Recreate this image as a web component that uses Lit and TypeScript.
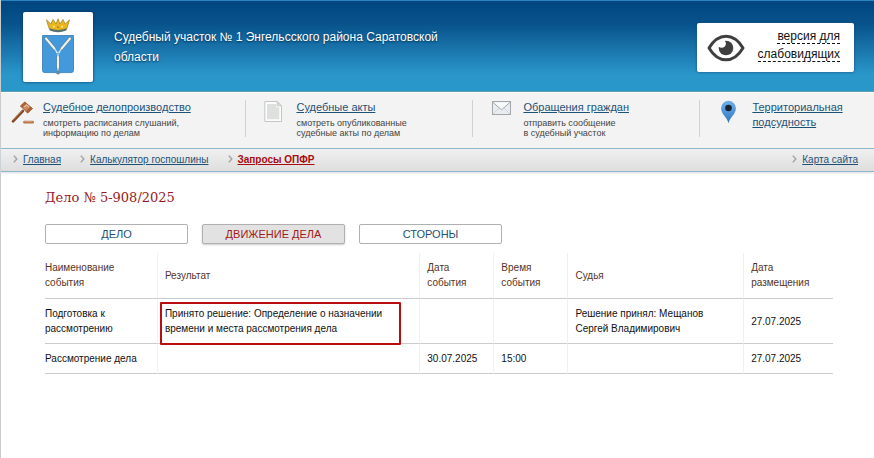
import { LitElement, html, svg, css, nothing } from "lit";
import { customElement, state } from "lit/decorators.js";
import { classMap } from "lit/directives/class-map.js";

const emblem = svg`
  <svg viewBox="0 0 34 58" width="34" height="58" aria-hidden="true">
    <path d="M5.4 1.8 9.8 6 12 1.4 15 6 17 .8 19 6 22 1.4 24.2 6 28.6 1.8 25.8 10.8Q17 14.4 8.2 10.8Z" fill="#e9b71d" stroke="#a07c1c" stroke-width=".7"/>
    <path d="M8.2 10.2Q17 13.6 25.8 10.2L25.3 12.6Q17 15.8 8.7 12.6Z" fill="#58716b"/>
    <circle cx="13" cy="8.6" r=".9" fill="#fff3a0"/><circle cx="17" cy="9.2" r=".9" fill="#b8701c"/><circle cx="21" cy="8.6" r=".9" fill="#fff3a0"/>
    <path d="M1.5 17.5H32.5V52.5Q32.5 54.6 30 54.6H20Q18 54.8 17 56.4Q16 54.8 14 54.6H4Q1.5 54.6 1.5 52.5Z" fill="#4499da" stroke="#3478b4" stroke-width=".8"/>
    <g stroke="#53768c" stroke-width="3.2" stroke-linecap="round"><path d="M5 20.5 13.4 30.5"/><path d="M29 20.5 20.6 30.5"/><path d="M17 39V49.5"/></g>
    <g stroke="#f3f1e6" stroke-width="2.2" stroke-linecap="round"><path d="M5 20.5 13.4 30.5"/><path d="M29 20.5 20.6 30.5"/><path d="M17 39V49.5"/></g>
    <path d="M13.4 30.5 16 34.4M20.6 30.5 18 34.4M17 36V39M17 50V54" fill="none" stroke="#dfe9ee" stroke-width="1.2"/>
    <circle cx="16" cy="34.6" r=".9" fill="#dfe8ea"/><circle cx="18.2" cy="34.6" r=".9" fill="#dfe8ea"/>
    <circle cx="17" cy="54" r="1.8" fill="#6a8798"/>
  </svg>`;

const eye = svg`
  <svg viewBox="0 0 38 28" width="38" height="28" aria-hidden="true">
    <path d="M2 14Q9 2.2 19 2.2T36 14Q29 25.8 19 25.8T2 14Z" fill="#fff" stroke="#3f3f3f" stroke-width="3" stroke-linejoin="round"/>
    <circle cx="19" cy="14" r="7.3" fill="#3f3f3f"/>
    <path d="M17.6 6.4A4.2 4.2 0 1 1 11.6 12.6L10.6 8.5Z" fill="#fff"/>
  </svg>`;

const gavel = svg`
  <svg viewBox="0 0 24 24" width="24" height="24" aria-hidden="true">
    <path d="M2 21.4 11.8 11" stroke="#7c4223" stroke-width="2.6" stroke-linecap="round"/>
    <path d="M2.4 20.2 11.2 10.8" stroke="#bd7a4b" stroke-width="1" stroke-linecap="round"/>
    <path d="M9.6 6 14 2.2 21.4 8.6 16.6 13Z" fill="#c98a5c" stroke="#8b4f2c" stroke-width=".9" stroke-linejoin="round"/>
    <path d="M9 6.2 13.6 1.6 15.8 3.4 11.2 7.8ZM14.8 11.2 19.6 6.6 21.8 8.6 16.9 13.2Z" fill="#a9633b"/>
    <path d="M13 7.2 15.4 5 18 7.2" fill="none" stroke="#ecc09c" stroke-width="1.1"/>
    <rect x="12.2" y="20.8" width="10.8" height="2.8" rx="1.4" fill="#b7744a"/>
    <path d="M13.6 21.6H21.6" stroke="#dfa47d" stroke-width=".8"/>
  </svg>`;

const page = svg`
  <svg viewBox="0 0 24 24" width="24" height="24" aria-hidden="true">
    <path d="M.8 1.5H13.2L17.5 5.8V21.5H.8Z" fill="#fcfcfc" stroke="#c4c6c6" stroke-width="1"/>
    <path d="M3 4H12.3V7.2H15.3V19.2H3Z" fill="#dde0dd"/>
    <path d="M13.2 1.5V5.8H17.5Z" fill="#d9dbdb" stroke="#c4c6c6" stroke-width=".8"/>
  </svg>`;

const mail = svg`
  <svg viewBox="0 0 24 24" width="24" height="24" aria-hidden="true">
    <rect x="1.5" y="1.5" width="18" height="13" fill="#e9edef" stroke="#a0a8ad"/>
    <path d="M2 14 8 8M19 14 13 8" stroke="#cfd6d9" stroke-width="1"/>
    <path d="M2 2.4 10.5 9.8 19 2.4" fill="#fafbfb" stroke="#a0a8ad" stroke-width="1"/>
  </svg>`;

const pin = svg`
  <svg viewBox="0 0 24 24" width="24" height="24" aria-hidden="true">
    <defs><linearGradient id="g" x1="0" y1="0" x2="0" y2="1"><stop offset="0" stop-color="#71afe6"/><stop offset="1" stop-color="#2d76c6"/></linearGradient></defs>
    <path d="M8.5 23.2C7.3 17.5 1.1 14.2 1.1 8.2A7.4 7.4 0 0 1 15.9 8.2C15.9 14.2 9.7 17.5 8.5 23.2Z" fill="url(#g)"/>
    <circle cx="8.5" cy="8" r="3.3" fill="#142433"/>
  </svg>`;

const arrow = svg`
  <svg class="arrow" viewBox="0 0 5 8" width="5" height="8" aria-hidden="true">
    <path d="M.8 .6 3.8 4 .8 7.4" fill="none" stroke="#a2a2a2" stroke-width="1.4"/>
  </svg>`;

const services = [
  { icon: gavel, title: "Судебное делопроизводство", note: ["смотреть расписания слушаний,", "информацию по делам"] },
  { icon: page, title: "Судебные акты", note: ["смотреть опубликованные", "судебные акты по делам"] },
  { icon: mail, title: "Обращения граждан", note: ["отправить сообщение", "в судебный участок"] },
  { icon: pin, title: "Территориальная подсудность", note: [] as string[] },
];

const tabs = ["ДЕЛО", "ДВИЖЕНИЕ ДЕЛА", "СТОРОНЫ"];

const columns = ["Наименование события", "Результат", "Дата события", "Время события", "Судья", "Дата размещения"];

const events = [
  ["Подготовка к рассмотрению", "Принято решение: Определение о назначении времени и места рассмотрения дела", "", "", "Решение принял: Мещанов Сергей Владимирович", "27.07.2025"],
  ["Рассмотрение дела", "", "30.07.2025", "15:00", "", "27.07.2025"],
];

@customElement("app-root")
export class AppRoot extends LitElement {
  static styles = css`
    :host {
      display: block;
      box-sizing: border-box;
      min-height: 100vh;
      border-left: 1px solid #c9cdd0;
      background: #fff;
      color: #111;
      font: 10px/15px "Liberation Sans", Arial, sans-serif;
    }
    * { box-sizing: border-box; }
    svg { display: block; flex: none; }
    a { color: #1d5277; }

    .header {
      display: flex;
      align-items: flex-start;
      height: 92px;
      padding: 11px 20px 0 22px;
      border-top: 1px solid #2a86c0;
      border-bottom: 1px solid #5f9dbd;
      background: linear-gradient(#004680, #08528b 25%, #2a97cb 82%, #2a97cb);
    }
    .logo {
      display: grid;
      place-items: center;
      flex: none;
      width: 70px;
      height: 70px;
      border-radius: 2px;
      background: #fff;
      box-shadow: 0 0 3px #00305c;
    }
    .court {
      width: 350px;
      margin: 15px auto 0 21px;
      color: #fff;
      font-size: 12px;
      font-weight: 400;
      line-height: 20px;
      text-shadow: 0 1px 2px #003058;
    }
    .vision {
      display: flex;
      align-items: center;
      justify-content: space-between;
      width: 157px;
      height: 49px;
      margin-top: 11px;
      padding: 0 14px 0 10px;
      border-radius: 2px;
      background: #fff;
      box-shadow: 0 0 3px #1c4e75;
      color: #111;
      font-size: 12px;
      line-height: 18px;
      text-align: right;
      text-decoration: none;
    }
    .label { padding-bottom: 6px; }
    .label span { border-bottom: 1px dashed #111; }

    .services {
      display: grid;
      grid-template-columns: 28fr 26fr 26fr 20fr;
      padding: 7px 0 11px;
      border-top: 1px solid #fff;
      background: #f3f3f3;
    }
    .service {
      display: flex;
      gap: 8px;
      height: 37px;
      padding-left: 18px;
      border-left: 1px solid #cfd1d2;
    }
    .service:first-child { padding-left: 10px; border-left: 0; }
    .service:last-child { padding-left: 20px; }
    .service a { font-size: 11px; line-height: 15px; }
    .service p { margin: 3px 0 0; color: #444; font-size: 9px; line-height: 10px; white-space: nowrap; }

    .crumbs {
      display: flex;
      align-items: center;
      gap: 19px;
      height: 24px;
      padding: 0 16px 2px 12px;
      border-top: 1px solid #8fb6cb;
      border-bottom: 1px solid #8fb6cb;
      background: linear-gradient(#f0f0f0, #dedede);
      box-shadow: 0 1px 2px #d5dde2;
    }
    .crumb { display: flex; align-items: center; gap: 5px; }
    .crumb:last-child { margin-left: auto; }
    .current { color: #a60d10; font-weight: 700; }

    main { padding: 16px 41px 0 44px; }
    h2 {
      margin: 0;
      color: #961a1c;
      font: 400 13px/20px Georgia, "DejaVu Serif", serif;
    }
    .tabs { display: flex; gap: 14px; margin: 16px 0 9px; }
    .tab {
      width: 143px;
      height: 20px;
      padding: 0;
      border: 1px solid #b0b0b0;
      border-radius: 2px;
      background: #fff;
      color: #1d5277;
      font: inherit;
      font-size: 11px;
    }
    .active { background: #e2e2e2; color: #a31a1d; box-shadow: 0 1px 2px #ccc; }

    table { width: 100%; border-collapse: separate; border-spacing: 0; table-layout: fixed; }
    th, td {
      padding: 7px;
      border-bottom: 1px solid #cbcbcb;
      border-left: 1px solid #f1f1f1;
      text-align: left;
      font-weight: 400;
      vertical-align: middle;
    }
    th { padding-bottom: 8px; color: #56341f; }
    th:first-child, td:first-child { padding-left: 0; border-left: 0; }
    .w0 { width: 14.2%; }
    .w1 { width: 33.3%; }
    .w2 { width: 9.4%; }
    .w4 { width: 22.3%; }
    .w5 { width: 11.4%; }
    .marked { position: relative; }
    .marked::after {
      content: "";
      position: absolute;
      inset: 3px 18px -2px 2px;
      border: 2px solid #b90d10;
      border-radius: 1px;
    }
  `;

  @state() private tab = 1;

  render() {
    return html`
      <header class="header">
        <div class="logo">${emblem}</div>
        <h1 class="court">Судебный участок № 1 Энгельсского района Саратовской области</h1>
        <a class="vision" href="#">${eye}<span class="label"><span>версия для</span><br /><span>слабовидящих</span></span></a>
      </header>
      <nav class="services">
        ${services.map(
          (s) => html`<div class="service">
            ${s.icon}
            <div>
              <a href="#">${s.title}</a>
              ${s.note.length ? html`<p>${s.note[0]}<br />${s.note[1]}</p>` : nothing}
            </div>
          </div>`
        )}
      </nav>
      <nav class="crumbs">
        <span class="crumb">${arrow}<a href="#">Главная</a></span>
        <span class="crumb">${arrow}<a href="#">Калькулятор госпошлины</a></span>
        <span class="crumb">${arrow}<a class="current" href="#">Запросы ОПФР</a></span>
        <span class="crumb">${arrow}<a href="#">Карта сайта</a></span>
      </nav>
      <main>
        <h2>Дело № 5-908/2025</h2>
        <div class="tabs">
          ${tabs.map(
            (t, i) => html`<button class=${classMap({ tab: true, active: i === this.tab })} @click=${() => (this.tab = i)}>${t}</button>`
          )}
        </div>
        <table>
          <colgroup>
            <col class="w0" /><col class="w1" /><col class="w2" /><col class="w2" /><col class="w4" /><col class="w5" />
          </colgroup>
          <thead>
            <tr>${columns.map((c) => html`<th scope="col">${c}</th>`)}</tr>
          </thead>
          <tbody>
            ${events.map(
              (row, r) => html`<tr>${row.map((cell, c) => html`<td class=${classMap({ marked: r === 0 && c === 1 })}>${cell}</td>`)}</tr>`
            )}
          </tbody>
        </table>
      </main>
    `;
  }
}
